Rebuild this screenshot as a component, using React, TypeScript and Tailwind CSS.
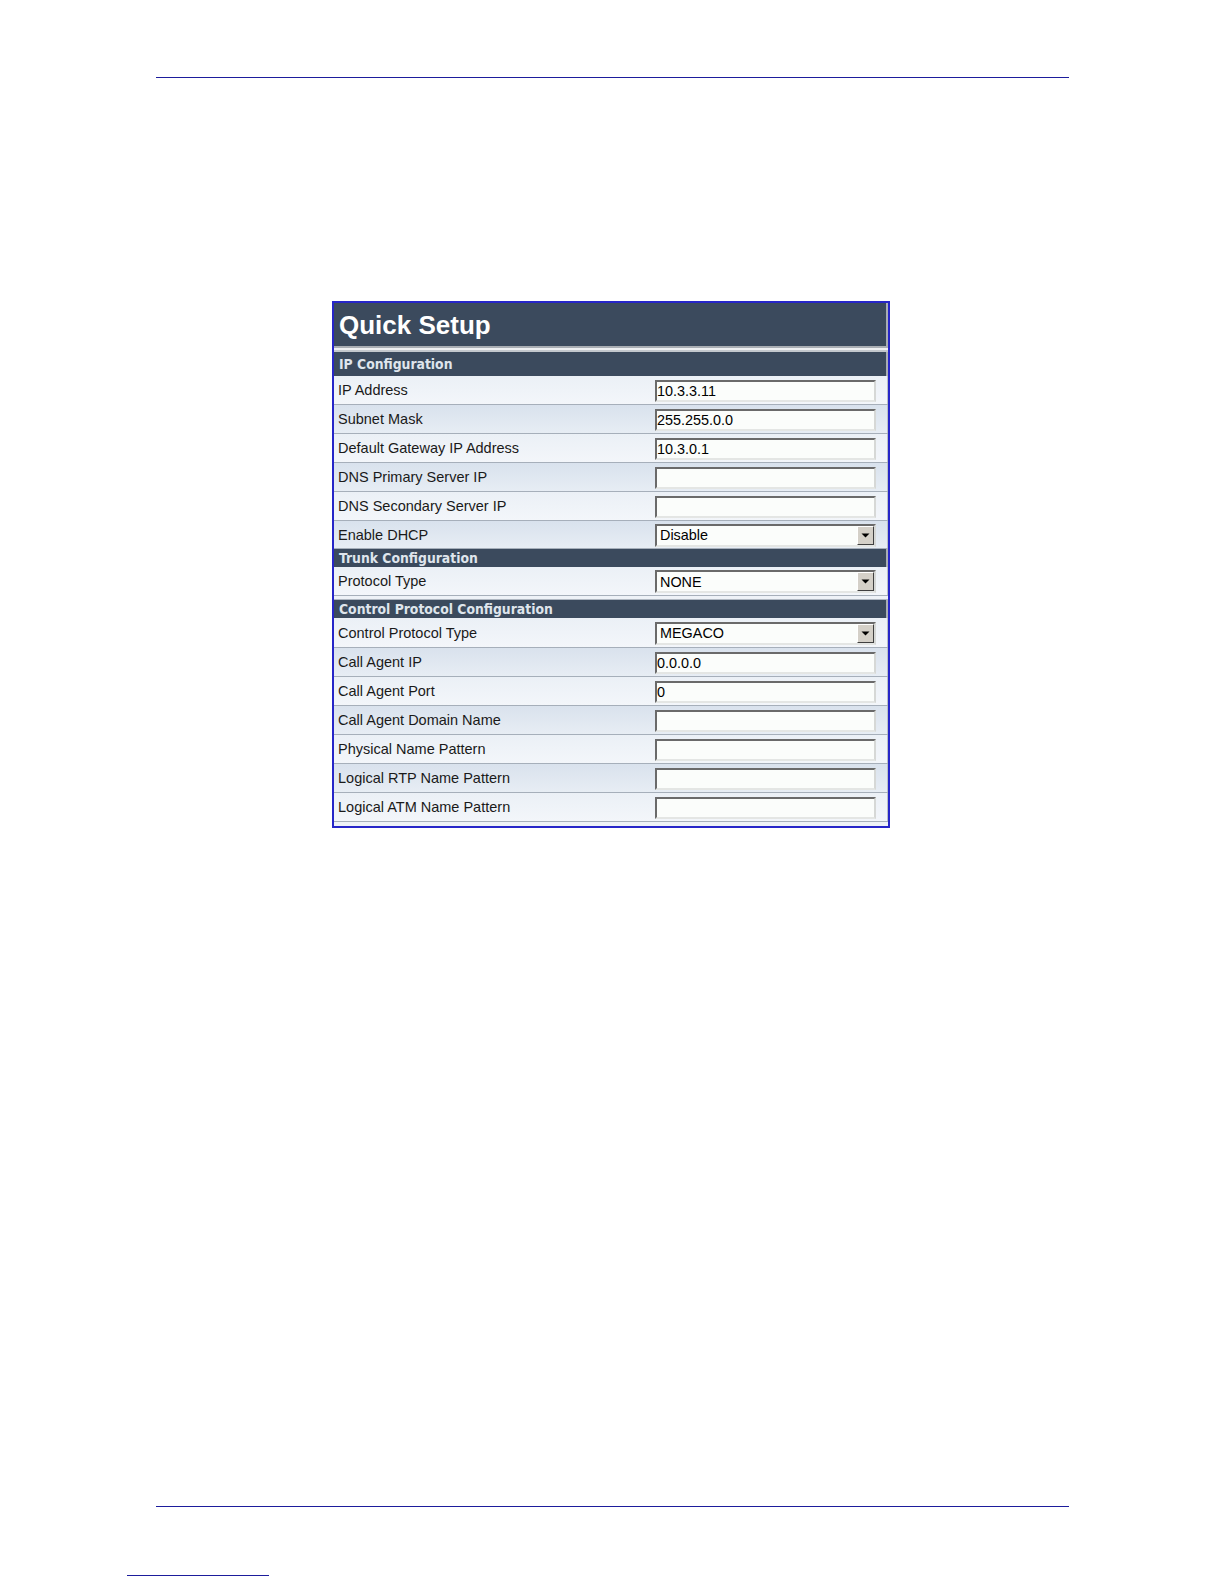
import React from "react";

const LABEL_FONT = { fontFamily: '"Liberation Sans", Arial, sans-serif' };
const HEAD_FONT = {
  fontFamily: '"DejaVu Sans Condensed", "DejaVu Sans", Verdana, sans-serif',
  fontStretch: "condensed" as const,
};

function TextBox({ value }: { value?: string }) {
  return (
    <div
      className="w-[221px] h-[22px] border-2 border-t-[#6a6a6a] border-l-[#6a6a6a] border-r-[#d6d8d6] border-b-[#e4e6e4] bg-[#fbfdfb] flex items-center text-[14.4px] text-black leading-none pt-[1px] overflow-hidden"
      style={LABEL_FONT}
    >
      {value ?? ""}
    </div>
  );
}

function SelectBox({ value }: { value: string }) {
  return (
    <div
      className="w-[221px] h-[23px] border-2 border-t-[#6a6a6a] border-l-[#6a6a6a] border-r-[#d6d8d6] border-b-[#e4e6e4] bg-[#fbfdfb] flex items-center text-[14.4px] text-black leading-none"
      style={LABEL_FONT}
    >
      <span className="flex-1 pl-[3px] pt-[1px]">{value}</span>
      <div className="w-[17px] h-[19px] bg-[#d4d0c8] border border-t-white border-l-white border-r-[#404040] border-b-[#404040] flex items-center justify-center">
        <svg width="9" height="5" viewBox="0 0 9 5">
          <path d="M0.5 0.5 H8.5 L4.5 4.5 Z" fill="#000" />
        </svg>
      </div>
    </div>
  );
}

function Row({
  label,
  dark,
  h,
  children,
}: {
  label: string;
  dark: boolean;
  h: string;
  children: React.ReactNode;
}) {
  return (
    <div
      className={`flex ${h} border-b border-[#a6afba] ${
        dark
          ? "bg-linear-to-b from-[#d9e2ed] to-[#e7edf4]"
          : "bg-linear-to-b from-[#ebf0f6] to-[#f3f6fa]"
      }`}
    >
      <div
        className="w-[321px] pl-[4px] pt-[2px] flex items-center text-[14.5px] text-[#1a1a1a]"
        style={LABEL_FONT}
      >
        {label}
      </div>
      <div className="flex items-center pt-[1px]">{children}</div>
      <div className="flex-1 border-r border-[#b9c0c8]" />
    </div>
  );
}

function Header({ title, h }: { title: string; h: string }) {
  return (
    <div
      className={`${h} bg-[#3b4a5d] flex items-center pl-[5px] pt-[1px] text-[13.8px] font-bold text-[#dfe5ec] border-r-2 border-[#a9aeb4]`}
      style={HEAD_FONT}
    >
      {title}
    </div>
  );
}

export default function App() {
  const ip = [
    { label: "IP Address", value: "10.3.3.11" },
    { label: "Subnet Mask", value: "255.255.0.0" },
    { label: "Default Gateway IP Address", value: "10.3.0.1" },
    { label: "DNS Primary Server IP", value: "" },
    { label: "DNS Secondary Server IP", value: "" },
  ];
  const cp = [
    { label: "Call Agent IP", value: "0.0.0.0" },
    { label: "Call Agent Port", value: "0" },
    { label: "Call Agent Domain Name", value: "" },
    { label: "Physical Name Pattern", value: "" },
    { label: "Logical RTP Name Pattern", value: "" },
    { label: "Logical ATM Name Pattern", value: "" },
  ];

  return (
    <div className="w-[1224px] h-[1584px] bg-white overflow-hidden flex flex-col">
      <div className="h-[77px] shrink-0" />
      <div className="ml-[156px] w-[913px] h-px bg-[#1d1d9c] shrink-0" />

      <div className="ml-[332px] mt-[223px] w-[558px] h-[527px] shrink-0 border-2 border-[#2626c8] bg-[#eef2f7] flex flex-col">
        {/* Title bar */}
        <div
          className="h-[43px] bg-[#3b4a5d] flex items-center pl-[5px] pt-[1px] text-[26px] font-bold text-white border-r-2 border-[#a9aeb4]"
          style={LABEL_FONT}
        >
          Quick Setup
        </div>
        <div className="h-[2px] bg-[#a9aeb4]" />
        <div className="h-[2px] bg-[#eef0f2]" />
        <div className="h-[2px] bg-[#c3c8cd]" />

        <Header title="IP Configuration" h="h-[24px]" />
        {ip.map((r, i) => (
          <Row key={r.label} label={r.label} dark={i % 2 === 1} h="h-[29px]">
            <TextBox value={r.value} />
          </Row>
        ))}
        <Row label="Enable DHCP" dark={true} h="h-[28px]">
          <SelectBox value="Disable" />
        </Row>

        <Header title="Trunk Configuration" h="h-[18px]" />
        <Row label="Protocol Type" dark={false} h="h-[29px]">
          <SelectBox value="NONE" />
        </Row>
        <div className="h-[4px] bg-[#eef2f7] border-b border-[#b0b8c2]" />

        <Header title="Control Protocol Configuration" h="h-[18px]" />
        <Row label="Control Protocol Type" dark={false} h="h-[30px]">
          <SelectBox value="MEGACO" />
        </Row>
        {cp.map((r, i) => (
          <Row key={r.label} label={r.label} dark={i % 2 === 0} h="h-[29px]">
            <TextBox value={r.value} />
          </Row>
        ))}
        <div className="flex-1 bg-[#eef2f7]" />
      </div>

      <div className="ml-[156px] mt-[678px] w-[913px] h-px bg-[#1d1d9c] shrink-0" />
      <div className="ml-[127px] mt-[68px] w-[142px] h-px bg-[#1d1d9c] shrink-0" />
    </div>
  );
}
